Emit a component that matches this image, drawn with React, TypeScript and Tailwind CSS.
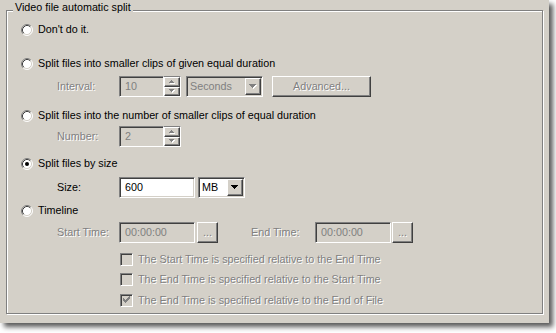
const sunken =
  "border border-t-[#808080] border-l-[#808080] border-r-white border-b-white shadow-[inset_1px_1px_0_#404040,inset_-1px_-1px_0_#d4d0c8]";
const raised =
  "border border-t-white border-l-white border-r-[#404040] border-b-[#404040] shadow-[inset_-1px_-1px_0_#808080]";
const dim = "text-[#808080] [text-shadow:1px_1px_0_#fff]";

function Radio({ checked = false }: { checked?: boolean }) {
  return (
    <svg width="12" height="12" viewBox="0 0 12 12" className="shrink-0">
      <circle cx="6" cy="6" r="5" fill="#fff" />
      <path d="M2.11 9.89 A5.5 5.5 0 0 1 9.89 2.11" stroke="#808080" fill="none" />
      <path d="M9.89 2.11 A5.5 5.5 0 0 1 2.11 9.89" stroke="#fff" fill="none" />
      <path d="M2.82 9.18 A4.5 4.5 0 0 1 9.18 2.82" stroke="#404040" fill="none" />
      <path d="M9.18 2.82 A4.5 4.5 0 0 1 2.82 9.18" stroke="#d4d0c8" fill="none" />
      {checked && <circle cx="6" cy="6" r="2" fill="#000" />}
    </svg>
  );
}

function RadioRow({ label, checked, className = "" }: { label: string; checked?: boolean; className?: string }) {
  return (
    <div className={`flex h-[13px] items-center gap-[5px] ${className}`}>
      <Radio checked={checked} />
      <span className="leading-[13px]">{label}</span>
    </div>
  );
}

function Check({ label, checked = false, className = "" }: { label: string; checked?: boolean; className?: string }) {
  return (
    <div className={`flex h-[13px] items-center gap-[5px] pl-[99px] ${className}`}>
      <div className={`${sunken} h-[13px] w-[13px] shrink-0 bg-[#d4d0c8]`}>
        {checked && (
          <svg width="11" height="11" viewBox="0 0 11 11" shapeRendering="crispEdges">
            <path
              fill="#808080"
              d="M8 1h1v1h-1zM7 2h2v1h-2zM2 3h1v1h-1zM6 3h3v1h-3zM2 4h2v1h-2zM5 4h3v1h-3zM2 5h5v1h-5zM3 6h3v1h-3zM4 7h1v1h-1z"
            />
          </svg>
        )}
      </div>
      <span className={`leading-[13px] ${dim}`}>{label}</span>
    </div>
  );
}

function Edit({ value, disabled = false, className }: { value: string; disabled?: boolean; className: string }) {
  return (
    <div
      className={`${sunken} flex h-[21px] items-center pl-[5px] ${
        disabled ? "bg-[#d4d0c8] text-[#808080]" : "bg-white text-black"
      } ${className}`}
    >
      {value}
    </div>
  );
}

function Arrow({ up = false, disabled = false }: { up?: boolean; disabled?: boolean }) {
  const d = up ? "M2 0h1v1h-1zM1 1h3v1h-3zM0 2h5v1h-5z" : "M0 0h5v1h-5zM1 1h3v1h-3zM2 2h1v1h-1z";
  return (
    <svg width="6" height="4" viewBox="0 0 6 4" shapeRendering="crispEdges">
      {disabled && <path d={d} fill="#fff" transform="translate(1 1)" />}
      <path d={d} fill={disabled ? "#808080" : "#000"} />
    </svg>
  );
}

function Spin() {
  return (
    <div className="flex h-[21px] w-[17px] flex-col border-t border-r border-b border-t-[#808080] border-r-white border-b-white">
      <div className={`${raised} flex flex-1 items-center justify-center bg-[#d4d0c8]`}>
        <Arrow up disabled />
      </div>
      <div className={`${raised} flex flex-1 items-center justify-center bg-[#d4d0c8]`}>
        <Arrow disabled />
      </div>
    </div>
  );
}

function DropArrow({ disabled = false }: { disabled?: boolean }) {
  const d = "M0 0h7v1h-7zM1 1h5v1h-5zM2 2h3v1h-3zM3 3h1v1h-1z";
  return (
    <svg width="8" height="5" viewBox="0 0 8 5" shapeRendering="crispEdges">
      {disabled && <path d={d} fill="#fff" transform="translate(1 1)" />}
      <path d={d} fill={disabled ? "#808080" : "#000"} />
    </svg>
  );
}

function Combo({ value, disabled = false, className }: { value: string; disabled?: boolean; className: string }) {
  return (
    <div className={`${sunken} flex h-[21px] items-center p-[1px] ${disabled ? "bg-[#d4d0c8]" : "bg-white"} ${className}`}>
      <span className={`flex-1 pl-[2px] ${disabled ? "text-[#808080]" : "text-black"}`}>{value}</span>
      <div className={`${raised} flex h-[17px] w-[16px] items-center justify-center bg-[#d4d0c8]`}>
        <DropArrow disabled={disabled} />
      </div>
    </div>
  );
}

function Button({ label, className }: { label: string; className: string }) {
  return (
    <div className={`${raised} flex h-[21px] items-center justify-center bg-[#d4d0c8] ${dim} ${className}`}>
      {label}
    </div>
  );
}

export default function App() {
  return (
    <div className="min-h-screen bg-white font-['Liberation_Sans',Arial,sans-serif] text-[10.75px] text-black">
      <div className="h-[323px] w-[549px] bg-[#d4d0c8] pt-[10px] pl-[6px] shadow-[4px_4px_5px_rgba(0,0,0,0.65)]">
        <div className="relative h-[304px] w-[537px] border border-[#808080] shadow-[inset_1px_1px_0_#fff,1px_1px_0_#fff]">
          <span className="absolute top-[-10px] left-[6px] bg-[#d4d0c8] px-[2px] leading-[13px]">
            Video file automatic split
          </span>

          <div className="flex flex-col pt-[12px] pl-[14px]">
            <RadioRow label="Don't do it." />
            <RadioRow className="mt-[21px]" label="Split files into smaller clips of given equal duration" />
            <div className="mt-[6px] flex h-[21px] items-center pl-[36px]">
              <span className={`w-[62px] ${dim}`}>Interval:</span>
              <Edit value="10" disabled className="w-[45px]" />
              <Spin />
              <Combo value="Seconds" disabled className="ml-[5px] w-[77px]" />
              <Button label="Advanced..." className="ml-[9px] w-[99px]" />
            </div>

            <RadioRow className="mt-[12px]" label="Split files into the number of smaller clips of equal duration" />
            <div className="mt-[4px] flex h-[21px] items-center pl-[36px]">
              <span className={`w-[62px] ${dim}`}>Number:</span>
              <Edit value="2" disabled className="w-[45px]" />
              <Spin />
            </div>

            <RadioRow className="mt-[10px]" checked label="Split files by size" />
            <div className="mt-[7px] flex h-[21px] items-center pl-[36px]">
              <span className="w-[62px]">Size:</span>
              <Edit value="600" className="w-[76px]" />
              <Combo value="MB" className="ml-[3px] w-[47px]" />
            </div>

            <RadioRow className="mt-[6px]" label="Timeline" />
            <div className="mt-[5px] flex h-[21px] items-center pl-[36px]">
              <span className={`w-[62px] ${dim}`}>Start Time:</span>
              <Edit value="00:00:00" disabled className="w-[76px]" />
              <Button label="..." className="ml-[2px] w-[21px]" />
              <span className={`ml-[33px] w-[64px] ${dim}`}>End Time:</span>
              <Edit value="00:00:00" disabled className="w-[76px]" />
              <Button label="..." className="ml-[1px] w-[21px]" />
            </div>

            <Check className="mt-[10px]" label="The Start Time is specified relative to the End Time" />
            <Check className="mt-[7px]" label="The End Time is specified relative to the Start Time" />
            <Check className="mt-[8px]" checked label="The End Time is specified relative to the End of File" />
          </div>
        </div>
      </div>
    </div>
  );
}
